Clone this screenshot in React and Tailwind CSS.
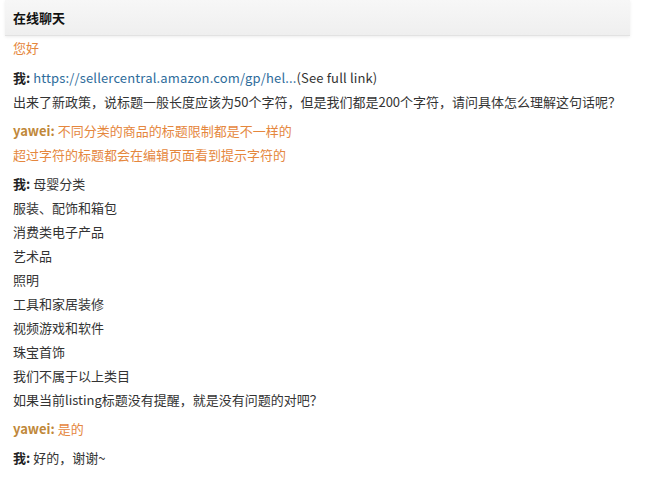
import React from 'react';

const font = { fontFamily: '"Noto Sans CJK SC", "Noto Sans", sans-serif' };

const Me = ({ children }) => (
  <div className="h-6 leading-6">
    <span className="font-bold text-[#222]">我:</span> {children}
  </div>
);

const Line = ({ children }) => <div className="h-6 leading-6">{children}</div>;

const Agent = ({ children }) => (
  <div className="h-6 leading-6 text-[#e5873d]">
    <span className="font-bold text-[#c0883a]">yawei:</span> {children}
  </div>
);

const categories = [
  '服装、配饰和箱包',
  '消费类电子产品',
  '艺术品',
  '照明',
  '工具和家居装修',
  '视频游戏和软件',
  '珠宝首饰',
  '我们不属于以上类目',
  '如果当前listing标题没有提醒，就是没有问题的对吧？',
];

export default function App() {
  return (
    <div className="w-[650px] h-[491px] bg-white text-[13px] text-[#333]" style={font}>
      <div className="ml-[5px] w-[625px] h-[36px] flex items-center px-2 bg-gradient-to-b from-[#f7f7f7] to-[#efefef] border-b border-[#e2e2e2] shadow-[0_1px_3px_rgba(0,0,0,0.08)]">
        <span className="font-bold text-[#111]">在线聊天</span>
      </div>
      <div className="pl-[13px]">
        <div className="h-6 leading-6 text-[#e5873d]">您好</div>
        <div className="h-[6px]" />
        <Me>
          <span className="text-[#2e6c9b] tracking-[0.15px]">https://sellercentral.amazon.com/gp/hel...</span>
          <span className="text-[#333] tracking-[0.15px]">(See full link)</span>
        </Me>
        <Line>出来了新政策，说标题一般长度应该为50个字符，但是我们都是200个字符，请问具体怎么理解这句话呢？</Line>
        <div className="h-[5px]" />
        <Agent>不同分类的商品的标题限制都是不一样的</Agent>
        <div className="h-6 leading-6 text-[#e5873d]">超过字符的标题都会在编辑页面看到提示字符的</div>
        <div className="h-[5px]" />
        <Me>母婴分类</Me>
        {categories.map((c) => (
          <Line key={c}>{c}</Line>
        ))}
        <div className="h-[5px]" />
        <Agent>是的</Agent>
        <div className="h-[5px]" />
        <Me>好的，谢谢~</Me>
      </div>
    </div>
  );
}
